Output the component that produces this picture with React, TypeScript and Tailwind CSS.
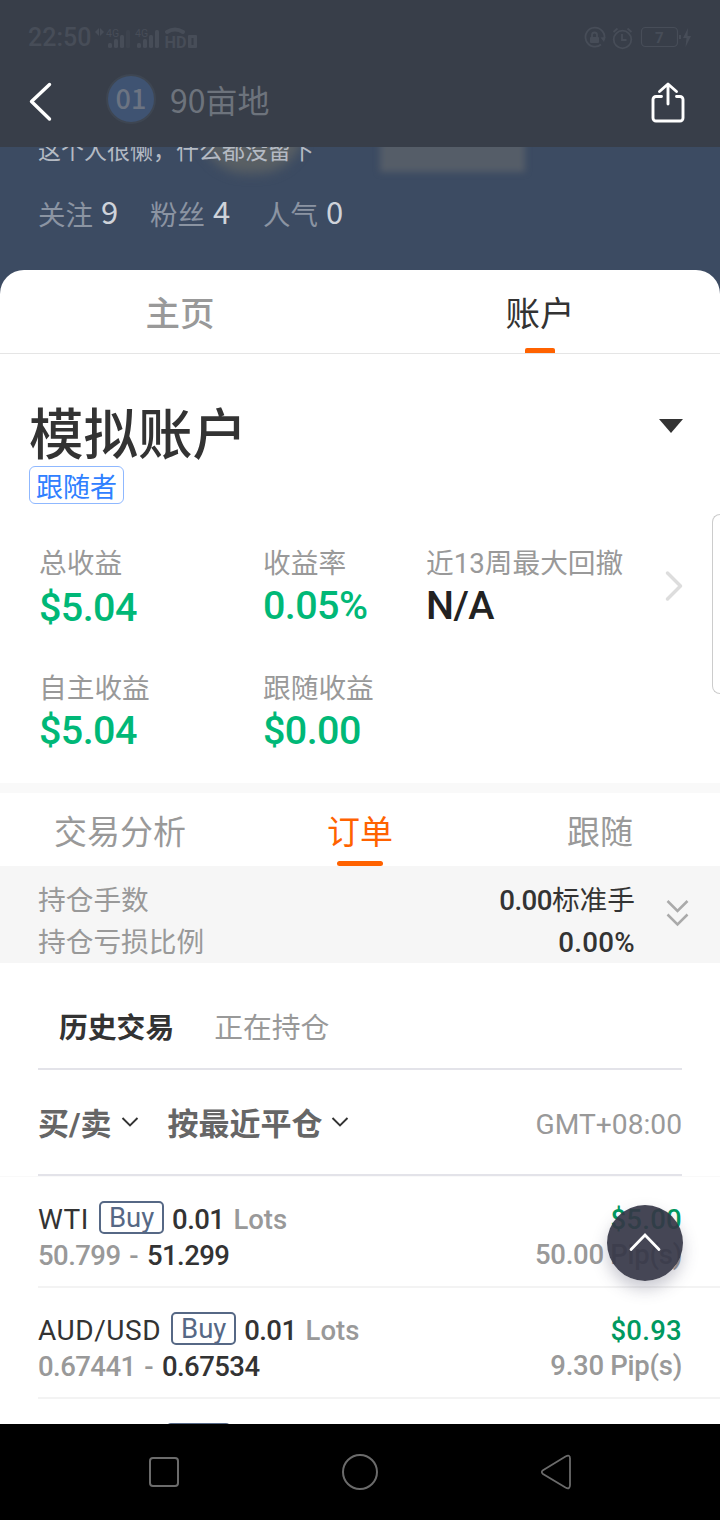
const trades = [
  { id: 1, symbol: 'WTI', lots: '0.01', open: '50.799', close: '51.299', profit: '$5.00', pips: '50.00 Pip(s)' },
  { id: 2, symbol: 'AUD/USD', lots: '0.01', open: '0.67441', close: '0.67534', profit: '$0.93', pips: '9.30 Pip(s)' },
]

const follows = [
  { label: '关注', value: '9', width: 'w-[112px]' },
  { label: '粉丝', value: '4', width: 'w-[113px]' },
  { label: '人气', value: '0', width: 'w-[113px]' },
]

function StatusBar() {
  return (
    <div className="flex h-[74px] items-center pl-[28px] pr-[27px] pt-[2px] text-[#474d58]">
      <span className="text-[25px] font-medium leading-[28px]">22:50</span>
      <svg className="ml-[4px]" width="104" height="24" viewBox="94 24 104 24" fill="currentColor">
        <path d="M94 30l4-4v8zM103 30l-4-4v8z" />
        <text x="105" y="34.500" fontSize="10.500">4G</text>
        <rect x="107" y="41" width="4" height="5" rx="1.500" />
        <rect x="113" y="37" width="4" height="9" rx="1.500" />
        <rect x="119" y="33" width="4" height="13" rx="1.500" />
        <rect x="125" y="28" width="4" height="18" rx="1.500" opacity=".35" />
        <text x="134" y="34.500" fontSize="10.500">4G</text>
        <rect x="136" y="41" width="4" height="5" rx="1.500" />
        <rect x="142" y="37" width="4" height="9" rx="1.500" />
        <rect x="148" y="33" width="4" height="13" rx="1.500" />
        <rect x="154" y="28" width="4" height="18" rx="1.500" />
        <path d="M166 30q8-5 16 0" fill="none" stroke="currentColor" strokeWidth="4" strokeLinecap="round" />
        <text x="163.500" y="46" fontSize="17" fontWeight="700" textLength="22" lengthAdjust="spacingAndGlyphs">
          HD
        </text>
        <rect x="187" y="33" width="9" height="13" rx="1" />
        <rect x="190.500" y="36" width="2" height="7" fill="#383e49" />
      </svg>
      <svg className="ml-auto" width="110" height="26" viewBox="584 24 110 26" fill="none" stroke="currentColor" strokeWidth="1.8">
        <path d="M602 43.500a9.500 9.500 0 1 1 3.200-5" />
        <path d="M601.500 36.500l3.500 4.500 1.500-5z" fill="currentColor" stroke="none" />
        <rect x="591" y="36" width="9" height="6" rx="1" fill="currentColor" stroke="none" />
        <path d="M593 36v-2a2.500 2.500 0 0 1 5 0v2" />
        <circle cx="623.500" cy="38.500" r="8.800" />
        <path d="M623 33v6h4.500M614.500 31l4-3.500M632.500 31l-4-3.500" />
        <rect x="642.500" y="26.500" width="36" height="19" rx="4" strokeWidth="1.200" />
        <path d="M681 34v4" strokeWidth="2" />
        <text x="656" y="42" fontSize="15" fontWeight="700" fill="currentColor" stroke="none">7</text>
        <path d="M689 27l-5 10h3.500l-1 9 5.500-11h-3.500z" fill="currentColor" stroke="none" />
      </svg>
    </div>
  )
}

function Header() {
  return (
    <header className="h-[147px] shrink-0 bg-[#383e49]">
      <StatusBar />
      <div className="flex h-[56px] items-center pl-[28px] pr-[34px]">
        <svg width="24" height="42" viewBox="0 0 24 42" fill="none" stroke="#fff" strokeWidth="3.400" strokeLinecap="round" strokeLinejoin="round">
          <path d="M21.500 3.500L3.500 20.500l18 17.500" />
        </svg>
        <div className="-mt-[6px] ml-[54px] flex size-[50px] items-center justify-center rounded-full border-2 border-[#3e4652] bg-[#3f5372] pb-[4px] text-[27px] leading-none font-medium text-[#6c7482] [font-family:'Noto_Sans_CJK_SC',sans-serif]">
          01
        </div>
        <h1 className="-mt-[6px] ml-[14px] text-[32px] leading-[40px] text-[#6d737c] [font-family:'Noto_Sans_CJK_SC',sans-serif]">
          90亩地
        </h1>
        <svg className="ml-auto" width="36" height="42" viewBox="0 0 36 42" fill="none" stroke="#fff" strokeWidth="2.900" strokeLinecap="round" strokeLinejoin="round">
          <path d="M11.500 15.500H6a3 3 0 0 0-3 3V37a3 3 0 0 0 3 3h24a3 3 0 0 0 3-3V18.500a3 3 0 0 0-3-3H26.500" />
          <path d="M18 23V3.500M9.500 10.500L18 3l8.500 7.500" />
        </svg>
      </div>
    </header>
  )
}

function Hero() {
  return (
    <div className="relative h-[123px] shrink-0 overflow-hidden">
      <div className="absolute -top-[66px] left-[200px] h-[92px] w-[104px] rounded-full bg-[#5a6064] blur-[6px]" />
      <div className="absolute -top-[20px] left-[380px] h-[45px] w-[145px] bg-[#555d68] blur-[3px]" />
      <p className="relative -mt-[11px] pl-[38px] text-[23px] leading-[32px] text-[#b4bac3]">
        这个人很懒，什么都没留下
      </p>
      <div className="mt-[24px] flex pl-[38px]">
        {follows.map((item) => (
          <div key={item.label} className={`${item.width} flex items-baseline text-[27.500px] leading-[40px] text-[#8b94a2]`}>
            {item.label}
            <span className="relative -top-px ml-[8px] text-[31px] text-[#cfd3da] [font-family:'Noto_Sans_CJK_SC',sans-serif]">
              {item.value}
            </span>
          </div>
        ))}
      </div>
    </div>
  )
}

function Stat({ label, value, className = 'text-[#00b877]' }: { label: string; value: string; className?: string }) {
  return (
    <div>
      <p className="text-[27.700px] leading-[40px] text-[#999]">{label}</p>
      <p className={`text-[39.500px] leading-[44px] font-medium tracking-[-0.015em] ${className}`}>{value}</p>
    </div>
  )
}

function Account() {
  return (
    <section className="relative h-[429px] pt-[47px]">
      <div className="flex h-[62px] items-center justify-between pl-[29px] pr-[37px]">
        <h2 className="pt-[5px] text-[54.500px] leading-[62px] font-medium text-[#333]">模拟账户</h2>
        <svg className="-mt-[12px]" width="24" height="14" viewBox="0 0 24 14">
          <path d="M0 0h24L12 14z" fill="#333" />
        </svg>
      </div>
      <span className="ml-[29px] mt-[3px] flex h-[38px] w-[95px] items-center justify-center rounded-[6px] border border-[#8fb8ff] pt-[5px] text-[27px] leading-[36px] text-[#2f80ff]">
        跟随者
      </span>
      <div className="mt-[40px] grid grid-cols-[224px_163px_239px_1fr] pl-[39px]">
        <div className="[&_p:last-child]:pt-[2px]">
          <Stat label="总收益" value="$5.04" />
        </div>
        <Stat label="收益率" value="0.05%" />
        <Stat label="近13周最大回撤" value="N/A" className="text-[#222]" />
        <svg className="mt-[26px]" width="18" height="32" viewBox="0 0 18 32" fill="none" stroke="#ddd" strokeWidth="3.500" strokeLinecap="round" strokeLinejoin="round">
          <path d="M2.500 3l13 13-13 13" />
        </svg>
      </div>
      <div className="mt-[39px] grid grid-cols-[224px_1fr] pl-[39px]">
        <Stat label="自主收益" value="$5.04" />
        <Stat label="跟随收益" value="$0.00" />
      </div>
      {/* edge drawer handle */}
      <div className="absolute right-0 top-[160px] h-[180px] w-[8px] rounded-l-[8px] border border-r-0 border-[#ccc] bg-white" />
    </section>
  )
}

function SmallChevron() {
  return (
    <svg width="18" height="12" viewBox="0 0 18 12" fill="none" stroke="#333" strokeWidth="1.900">
      <path d="M1.500 2L9 9.500 16.500 2" />
    </svg>
  )
}

function Orders() {
  return (
    <section>
      <div className="grid h-[73px] grid-cols-3 text-center text-[33px] leading-[79px] text-[#999]">
        <span>交易分析</span>
        <span className="relative text-[#ff6200]">
          订单
          <i className="absolute left-[97px] top-[68px] h-[5px] w-[46px] rounded-full bg-[#ff6200]" />
        </span>
        <span>跟随</span>
      </div>
      <div className="flex h-[97px] items-center bg-[#f6f6f6] pl-[38px] pr-[31px] text-[27.700px] leading-[42px]">
        <div className="pt-[14px] text-[#999]">
          <p>持仓手数</p>
          <p>持仓亏损比例</p>
        </div>
        <div className="ml-auto pt-[14px] text-right text-[#333]">
          <p>
            <span className="font-medium tracking-[-0.020em]">0.00</span>标准手
          </p>
          <p className="font-medium tracking-[0.010em]">0.00%</p>
        </div>
        <svg className="-mt-[4px] ml-[31px]" width="23" height="28" viewBox="0 0 23 28" fill="none" stroke="#aaa" strokeWidth="2.500">
          <path d="M1.500 2L11.500 12l10-10M1.500 15.500l10 10 10-10" />
        </svg>
      </div>
      <div className="flex h-[105px] gap-[40px] pl-[59px] pt-[39px] text-[28.800px] leading-[52px] text-[#999]">
        <span className="font-bold text-[#333]">历史交易</span>
        <span>正在持仓</span>
      </div>
      <div className="border-b border-[#f9f9f9]">
        <div className="mx-[38px] flex h-[108px] items-center border-y-2 border-[#e3e3e9] text-[31px] leading-[44px] font-bold text-[#666]">
          <span className="pt-[5px]">买/卖</span>
          <span className="ml-[9px]">
            <SmallChevron />
          </span>
          <span className="ml-[29px] pt-[5px]">按最近平仓</span>
          <span className="ml-[8px]">
            <SmallChevron />
          </span>
          <span className="ml-auto pt-[5px] text-[28.200px] font-normal text-[#999]">GMT+08:00</span>
        </div>
      </div>
      <ul>
        {trades.map((trade) => (
          <li key={trade.id} className="ml-[38px] flex h-[111px] justify-between border-b-2 border-[#f3f3f3] pr-[38px] pt-[24px] text-[27.500px] font-medium text-[#999]">
            <div>
              <div className="flex h-[33px] items-center">
                <span className="pt-[4px] text-[28px] font-normal leading-[34px] tracking-[0.020em] text-[#333]">{trade.symbol}</span>
                <span className="ml-[10px] h-[33px] w-[65px] rounded-[5px] border-2 border-[#566885] text-center text-[27.500px] leading-[30px] font-normal text-[#566885]">
                  Buy
                </span>
                <span className="ml-[8px] pt-[4px] leading-[34px] tracking-[-0.020em] text-[#333]">{trade.lots}</span>
                <span className="ml-[9px] pt-[4px] leading-[34px]">Lots</span>
              </div>
              <p className="mt-[3px] leading-[38px] tracking-[-0.020em] [word-spacing:2.500px]">
                {trade.open} - <span className="text-[#333]">{trade.close}</span>
              </p>
            </div>
            <div className="text-right">
              <p className="h-[33px] leading-[37px] tracking-[0.010em] text-[#009960]">{trade.profit}</p>
              <p className="mt-[2px] leading-[38px] tracking-[-0.010em]">{trade.pips}</p>
            </div>
          </li>
        ))}
        {/* next row, only the top of its badge is in view */}
        <li className="ml-[38px] h-[25px] overflow-hidden pt-[24px]">
          <span className="ml-[128px] block h-[33px] w-[65px] rounded-[5px] border-2 border-[#566885]" />
        </li>
      </ul>
    </section>
  )
}

function NavBar() {
  return (
    <nav className="flex h-[96px] shrink-0 items-center justify-between bg-black pl-[149px] pr-[148px]">
      <span className="size-[30px] rounded-[4px] border-2 border-[#6b6b6b]" />
      <span className="size-[36px] rounded-full border-2 border-[#6b6b6b]" />
      <svg width="32" height="36" viewBox="0 0 32 36" fill="none" stroke="#6b6b6b" strokeWidth="1.800">
        <path d="M3 16.200L25.500 2.500Q30 0 30 4.500V31Q30 36 25.500 33.500L3 20Q0.500 18 3 16.200z" />
      </svg>
    </nav>
  )
}

export default function App() {
  return (
    <div className="relative flex h-[1520px] w-[720px] flex-col overflow-hidden bg-[#3c4b62] [font-family:Roboto,'Noto_Sans_CJK_SC',sans-serif]">
      <Header />
      <Hero />
      <main className="min-h-0 flex-1 overflow-hidden rounded-t-[24px] bg-white">
        <div className="grid h-[84px] grid-cols-2 border-b border-[#e5e5e5] text-center text-[34.500px] leading-[89px]">
          <span className="font-medium text-[#999]">主页</span>
          <span className="relative text-[#333]">
            账户
            <i className="absolute left-[165px] top-[78px] h-[5px] w-[30px] rounded-t-[2px] bg-[#ff6200]" />
          </span>
        </div>
        <Account />
        <div className="h-[10px] bg-[#f9f9f9]" />
        <Orders />
      </main>
      <NavBar />
      <button className="absolute left-[607px] top-[1205px] flex size-[76px] items-center justify-center rounded-full bg-[#353646]/92 shadow-[0_8px_16px_rgba(60,60,90,0.28)]">
        <svg className="-mt-[2px]" width="32" height="20" viewBox="0 0 32 20" fill="none" stroke="#fff" strokeWidth="2.800" strokeLinecap="round">
          <path d="M2 17.500L16 3l14 14.500" />
        </svg>
      </button>
    </div>
  )
}
